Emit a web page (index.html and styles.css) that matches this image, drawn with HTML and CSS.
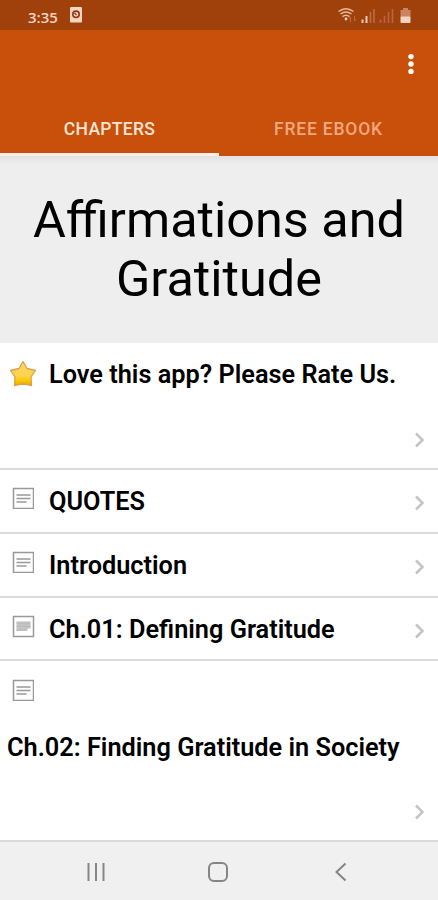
FILE: index.html
```html
<!DOCTYPE html>
<html lang="en">
<head>
    <meta charset="UTF-8">
    <meta name="viewport" content="width=device-width, initial-scale=1.0">
    <title>Affirmations and Gratitude</title>
    <link rel="stylesheet" href="styles.css">
</head>
<body>
    <!-- Shared icons -->
    <svg width="0" height="0" class="defs">
        <symbol id="page" viewBox="0 0 22 22">
            <rect x="1.500" y="1.500" width="20" height="20" fill="#fff" stroke="#999" stroke-width="1.500"/>
            <path d="M4.500 8h14M4.500 11.500h14M4.500 15h10" stroke="#999" stroke-width="1.400"/>
        </symbol>
        <symbol id="arrow" viewBox="0 0 12 16">
            <path d="M2 1.500L8.500 8L2 14.500" fill="none" stroke="#c4c4c4" stroke-width="2.500"/>
        </symbol>
    </svg>

    <div class="status">
        <span class="time">3:35</span>
        <svg class="alarm" width="12" height="16" viewBox="0 0 12 16">
            <rect width="12" height="15.500" rx="1" fill="#f5d3c1"/>
            <circle cx="6" cy="7.300" r="3.200" fill="none" stroke="#8b3a0e" stroke-width="1.600"/>
            <path d="M4.500 6L6.500 8" fill="none" stroke="#8b3a0e" stroke-width="1.200"/>
        </svg>
        <svg class="signals" width="76" height="18" viewBox="0 0 76 18">
            <g fill="none" stroke="#eab99f" stroke-width="1.500">
                <path d="M1.500 4.500Q9 -1 16.500 4.500"/>
                <path d="M3.500 7Q9 3 14.500 7"/>
                <path d="M5.500 9.700Q9 7 12.500 9.700"/>
            </g>
            <circle cx="9" cy="12" r="1.400" fill="#f5d3c1"/>
            <path d="M13.500 15V10M12 12l1.500-2M17.500 9v5M17.500 14l1.500-2" stroke="#b66a42" fill="none"/>
            <path d="M25.500 12.500V16M29.500 9V16" stroke="#f1c9b3" stroke-width="2"/>
            <path d="M33.500 5V16M37 2V16" stroke="#b96c43" stroke-width="1.700"/>
            <path d="M43.500 12.500V16M47.500 9V16M51.500 5V16M55.500 2V16" stroke="#b5663d" stroke-width="1.700"/>
            <path d="M66 1h5v2h2.500v7h-10v-7h2.500z" fill="#c98462"/>
            <rect x="63.500" y="9.500" width="10" height="6.500" rx="1" fill="#f5d3c1"/>
        </svg>
    </div>

    <div class="toolbar">
        <div class="actions">
            <svg width="8" height="22" viewBox="0 0 8 22" fill="#fff">
                <circle cx="4" cy="3.600" r="2.700"/>
                <circle cx="4" cy="11" r="2.700"/>
                <circle cx="4" cy="18.400" r="2.700"/>
            </svg>
        </div>
        <div class="tabs">
            <div class="tab selected"><span>CHAPTERS</span></div>
            <div class="tab"><span>FREE EBOOK</span></div>
        </div>
    </div>

    <h1 class="title">Affirmations and<br>Gratitude</h1>

    <div class="list">
        <div class="row tall">
            <svg class="star" width="28" height="28" viewBox="0 0 28 28">
                <defs>
                    <linearGradient id="gold" x1="0" y1="0" x2="0" y2="1">
                        <stop offset="0" stop-color="#fbd568"/>
                        <stop offset=".6" stop-color="#fbd34f"/>
                        <stop offset=".8" stop-color="#f9c800"/>
                        <stop offset="1" stop-color="#eda70c"/>
                    </linearGradient>
                </defs>
                <path d="M14 1.500L18 8.500L26.500 10.500L22 17L22.500 25.500Q18 24.500 14 24Q10 24.500 5.500 25.500L6 17L1.500 10.500L10 8.500Z" fill="url(#gold)" stroke="#dda044" stroke-width="1.300" stroke-linejoin="round"/>
            </svg>
            <span class="label">Love this app? Please Rate Us.</span>
            <svg class="arrow"><use href="#arrow"/></svg>
        </div>
        <div class="row">
            <svg class="page"><use href="#page"/></svg>
            <span class="label">QUOTES</span>
            <svg class="arrow"><use href="#arrow"/></svg>
        </div>
        <div class="row">
            <svg class="page"><use href="#page"/></svg>
            <span class="label">Introduction</span>
            <svg class="arrow"><use href="#arrow"/></svg>
        </div>
        <div class="row short">
            <svg class="page" viewBox="0 0 22 22">
                <rect x="1.500" y="1.500" width="20" height="20" fill="#fff" stroke="#999" stroke-width="1.500"/>
                <path d="M4.500 6.500h14v7h-3v2.500h-11z" fill="#c4c4c4"/>
                <path d="M4.500 8h14M4.500 11.500h14M4.500 15h10" stroke="#bababa"/>
            </svg>
            <span class="label">Ch.01: Defining Gratitude</span>
            <svg class="arrow"><use href="#arrow"/></svg>
        </div>
        <div class="row wrapped">
            <svg class="page"><use href="#page"/></svg>
            <span class="label">Ch.02: Finding Gratitude in Society</span>
            <svg class="arrow"><use href="#arrow"/></svg>
        </div>
    </div>

    <div class="navbar">
        <svg width="20" height="20" viewBox="0 0 20 20">
            <path d="M2.500 1v18M10 1v18M17.500 1v18" stroke="#858585" stroke-width="2"/>
        </svg>
        <svg class="home" width="22" height="22" viewBox="0 0 22 22">
            <rect x="2" y="2" width="18" height="18" rx="5" fill="none" stroke="#858585" stroke-width="2"/>
        </svg>
        <svg width="14" height="20" viewBox="0 0 14 20">
            <path d="M11.500 1.500L2.500 10L11.500 18.500" fill="none" stroke="#858585" stroke-width="2"/>
        </svg>
    </div>
</body>
</html>
```
FILE: styles.css
```css
:root {
    --orange: #c8500b;
    --dark: #a0400a;
    --grey: #eeeeee;
    --line: #dadada;
}

* {
    box-sizing: border-box;
}

body {
    margin: 0;
    height: 900px;
    display: flex;
    flex-direction: column;
    overflow: hidden;
    background-color: white;
    font-family: Roboto, "Liberation Sans", sans-serif;
}

svg {
    flex: none;
    display: block;
    overflow: visible;
}

.defs {
    display: none;
}

.status {
    height: 30px;
    flex: none;
    display: flex;
    padding: 7px 25px 0 28px;
    background-color: var(--dark);
    color: #f5d3c1;
}

.time {
    width: 42px;
    font: 600 15px/20px "Open Sans", sans-serif;
}

.signals {
    margin-left: auto;
}

.toolbar {
    height: 126px;
    flex: none;
    display: flex;
    flex-direction: column;
    justify-content: space-between;
    background-color: var(--orange);
}

.actions {
    display: flex;
    justify-content: flex-end;
    padding: 23px 23px 0 0;
}

.tabs {
    display: flex;
    height: 52px;
}

.tab {
    flex: 1;
    text-align: center;
    font-size: 17.5px;
    font-weight: 500;
    letter-spacing: .8px;
    line-height: 51px;
    color: #f0a87f;
}

.tab.selected {
    letter-spacing: .3px;
    color: #fde5d6;
    border-bottom: 3px solid #fbeee7;
}

.title {
    height: 187px;
    flex: none;
    margin: 0;
    padding-top: 34px;
    background: linear-gradient(#e2e2e2, var(--grey) 8px);
    font-size: 50.4px;
    font-weight: 400;
    line-height: 59px;
    text-align: center;
}

.list {
    flex: 1;
}

.row {
    height: 64px;
    display: flex;
    align-items: flex-start;
    padding: 17px 12px 0;
    border-bottom: 2px solid var(--line);
}

.row.short {
    height: 63px;
}

.row.tall {
    height: 127px;
    padding-left: 9px;
}

.label {
    margin-left: 15px;
    font-size: 25.3px;
    font-weight: 600;
    line-height: 30px;
    white-space: nowrap;
}

.tall .label {
    margin-left: 12px;
}

.page {
    width: 22px;
    height: 22px;
}

.arrow {
    width: 12px;
    height: 16px;
    margin: 8px 0 0 auto;
}

.tall .arrow {
    margin-top: 72px;
}

.row.wrapped {
    height: 181px;
    flex-direction: column;
}

.wrapped .page {
    margin-top: 1px;
}

.wrapped .label {
    margin: 32px 0 0 -5px;
}

.wrapped .arrow {
    margin-top: 41px;
}

.navbar {
    height: 58px;
    flex: none;
    display: flex;
    justify-content: space-between;
    align-items: center;
    padding: 2px 90px 0 86px;
    background-color: #f0f0f0;
}

.home {
    margin-right: 4px;
}
```
